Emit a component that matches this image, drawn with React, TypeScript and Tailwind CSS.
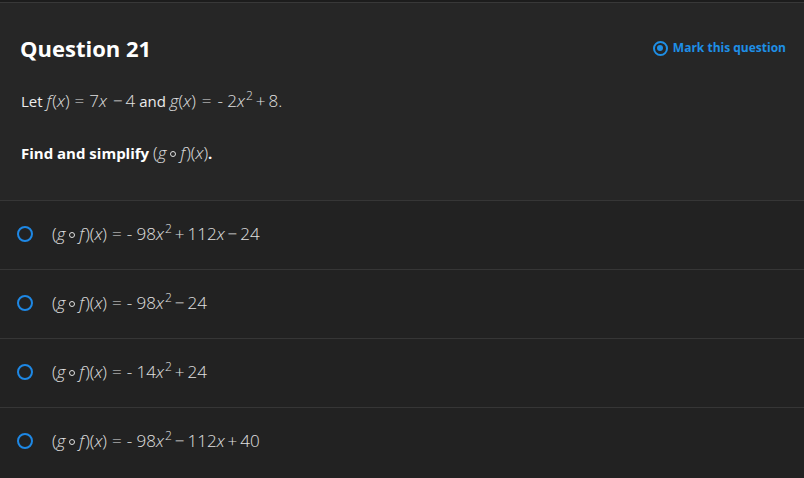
import React from 'react';

type Term = { t: string; x?: boolean; sup?: string };

const options: { id: string; rhs: Term[] }[] = [
  { id: 'a', rhs: [{ t: '- 98', x: true, sup: '2' }, { t: '+' }, { t: '112', x: true }, { t: '\u2212' }, { t: '24' }] },
  { id: 'b', rhs: [{ t: '- 98', x: true, sup: '2' }, { t: '\u2212' }, { t: '24' }] },
  { id: 'c', rhs: [{ t: '- 14', x: true, sup: '2' }, { t: '+' }, { t: '24' }] },
  { id: 'd', rhs: [{ t: '- 98', x: true, sup: '2' }, { t: '\u2212' }, { t: '112', x: true }, { t: '+' }, { t: '40' }] },
];

const isOp = (t: string) => t === '+' || t === '\u2212';

function Composite() {
  return (
    <span>
      (<i>g</i>
      <span className="inline-block mx-[4px] w-[6px] h-[6px] rounded-full border border-current align-[2px]" />
      <i className="mr-[1px]">f</i>)(<i>x</i>)
    </span>
  );
}

function Sup({ children }: { children: React.ReactNode }) {
  return <sup className="text-[12px] -top-[7px] ml-[1px]">{children}</sup>;
}

function Expr({ terms }: { terms: Term[] }) {
  return (
    <>
      {terms.map((term, i) =>
        isOp(term.t) ? (
          <span key={i} className="mx-[3px]">{term.t}</span>
        ) : (
          <React.Fragment key={i}>
            {term.t}
            {term.x && <i>x</i>}
            {term.sup && <Sup>{term.sup}</Sup>}
          </React.Fragment>
        )
      )}
    </>
  );
}

function Radio() {
  return <span className="block w-4 h-4 rounded-full border-2 border-[#1e88e5] shrink-0" />;
}

const math = 'font-light text-[17px] text-[#e0e0e0]';

export default function App() {
  return (
    <div
      className="w-[804px] h-[478px] overflow-hidden bg-[#222222] text-[#e6e6e6]"
      style={{ fontFamily: '"Open Sans", Lato, sans-serif' }}
    >
      <div className="h-[2px] bg-[#1c1c1c]" />
      <div className="h-[1px] bg-[#383838]" />
      <div className="bg-[#262626] h-[197px] pl-[21px] pr-5 pt-[30px]">
        <div className="flex items-center justify-between">
          <h1 className="text-[22px] font-bold text-white leading-[30px] ml-[-1px]">Question 21</h1>
          <button className="flex items-center gap-[5px] text-[12px] font-bold text-[#1e8fe6] mr-[-2px]">
            <span className="flex items-center justify-center w-[15px] h-[15px] rounded-full border-2 border-[#1e8fe6]">
              <span className="w-[6px] h-[6px] rounded-full bg-[#1e8fe6]" />
            </span>
            Mark this question
          </button>
        </div>
        <p className="mt-[26px] text-[15px] leading-[24px] text-[#ececec]">
          Let{' '}
          <span className={math}>
            <i className="mr-[1px]">f</i>(<i>x</i>)<span className="mx-[5px]">=</span>7<i>x</i>
            <span className="ml-[6px] mr-[3px]">{'\u2212'}</span>4
          </span>{' '}
          and{' '}
          <span className={math}>
            <i>g</i>(<i>x</i>)<span className="mx-[6px]">=</span>- 2<i>x</i>
            <Sup>2</Sup>
            <span className="mx-[3px]">+</span>8.
          </span>
        </p>
        <p className="mt-[28px] text-[15px] leading-[24px] font-bold text-white">
          Find and simplify{' '}
          <span className={math}>
            <Composite />
          </span>
          .
        </p>
      </div>
      {options.map((o) => (
        <div key={o.id} className="h-[69px] border-t border-[#363636] flex items-center pl-[17px] gap-[19px] pb-[2px]">
          <Radio />
          <span className={`${math} whitespace-nowrap`}>
            <Composite />
            <span className="mx-[5px]">=</span>
            <Expr terms={o.rhs} />
          </span>
        </div>
      ))}
    </div>
  );
}
